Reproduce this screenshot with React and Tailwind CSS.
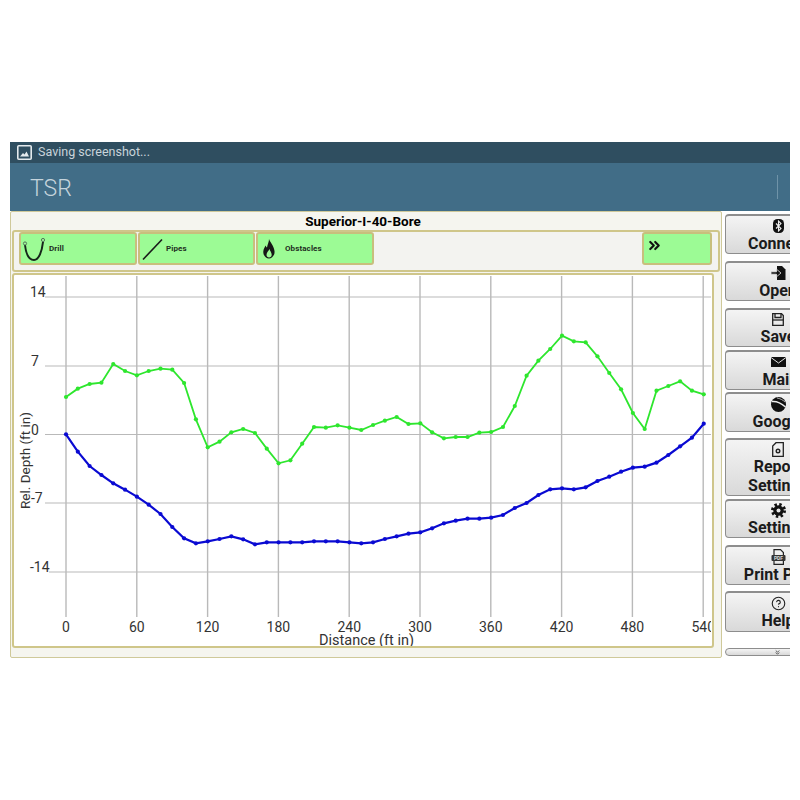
import { CircleHelp, ChevronsRight, ChevronsDown } from 'lucide-react';

const green = [381,356,342,338,282,303,316,303,296,299,339,448,532,515,487,477,489,536,580,571,521,471,473,466,473,480,465,452,441,462,460,487,505,501,501,488,486,471,408,317,272,237,197,214,217,259,309,358,429,477,362,348,334,362,373];
const blue = [493,545,588,615,640,659,680,704,732,771,805,820,814,807,799,808,823,817,817,817,817,814,814,814,817,820,817,807,799,791,787,775,760,752,746,746,743,735,714,699,675,658,655,658,652,633,620,605,593,590,578,555,529,503,461];

// values were read off the screenshot, chart svg starts at y=275
const toY = (z) => 270 + z / 3 - 275;
const toX = (i) => 52 + i * 11.81;
const xTicks = [0, 60, 120, 180, 240, 300, 360, 420, 480, 540];
const yTicks = [
  { label: 14, y: 22, lx: 16, x1: 31 },
  { label: 7, y: 91, lx: 17, x1: 31 },
  { label: 0, y: 159.5, lx: 17, x1: 31 },
  { label: -7, y: 228, lx: 17, x1: 31 },
  { label: -14, y: 297, lx: 16, x1: 35 },
];

const Series = ({ data, color, width }) => (
  <>
    <polyline points={data.map((v, i) => `${toX(i)},${toY(v)}`).join(' ')} fill="none" stroke={color} strokeWidth={width} />
    {data.map((v, i) => <circle key={i} cx={toX(i)} cy={toY(v)} r="2.1" fill={color} />)}
  </>
);

const Chart = () => (
  <svg width="697" height="371" className="block" style={{ fontFamily: 'Roboto, sans-serif' }}>
    {xTicks.map((t, i) => <line key={t} x1={52 + i * 70.8} x2={52 + i * 70.8} y1="1" y2="342" stroke="#b9b9b9" strokeWidth="1.4" />)}
    {yTicks.map((t) => <line key={t.label} x1={t.x1} x2="697" y1={t.y} y2={t.y} stroke="#b9b9b9" strokeWidth="1.2" />)}
    {yTicks.map((t) => <text key={t.label} x={t.lx} y={t.y} fontSize="14" fill="#333">{t.label}</text>)}
    {xTicks.map((t, i) => <text key={t} x={52 + i * 70.8} y="357" fontSize="14" fill="#333" textAnchor="middle">{t}</text>)}
    <text x="305" y="370" fontSize="14.5" fill="#333">Distance (ft in)</text>
    <text x="0" y="0" fontSize="13.5" fill="#333" transform="translate(16,234) rotate(-90)">Rel. Depth (ft in)</text>
    <Series data={green} color="#2ee62e" width="1.8" />
    <Series data={blue} color="#0a0ad2" width="2.2" />
  </svg>
);

const DrillIcon = () => (
  <svg width="28" height="28" viewBox="0 0 28 28" fill="none">
    <path d="M4 10 C5 19 8 25 13 25 C18 25 21 16 22 7" strokeWidth="2" stroke="#16261a" />
    <circle cx="4" cy="8.5" r="1.6" strokeWidth="1" stroke="#55705a" />
    <circle cx="22" cy="5" r="1.6" strokeWidth="1" stroke="#55705a" />
  </svg>
);

const PipeIcon = () => (
  <svg width="24" height="24" viewBox="0 0 24 24" fill="none" stroke="#1a1a1a" strokeWidth="1.6">
    <path d="M1 22.5 L20 2.5" />
  </svg>
);

const FlameIcon = () => (
  <svg width="12" height="20" viewBox="0 0 12 20">
    <path fill="#161616" fillRule="evenodd" d="M6 0 C7 3 11 7 11.5 12 C12 16 9 19.5 6 19.5 C3 19.5 0 16.5 0.3 12.5 C0.5 9.5 2 8 2.5 6.5 C3.2 7.5 3.5 8.5 4 8.5 C4.5 5.5 6 3 6 0 Z M6.5 10 C5.5 12 3.5 13.5 3.5 16 C3.5 17.5 4.7 18.5 6 18.5 C7.5 18.5 8.7 17.5 8.7 15.8 C8.7 13.5 7 12 6.5 10 Z" />
  </svg>
);

const BluetoothIcon = () => (
  <svg width="11" height="14" viewBox="0 0 11 14">
    <rect width="11" height="14" rx="4.5" fill="#111" />
    <path d="M3 4.5 L8 9.5 L5.5 12 V2 L8 4.5 L3 9.5" fill="none" stroke="#eee" strokeWidth="1.1" />
  </svg>
);

const OpenIcon = () => (
  <svg width="15" height="14" viewBox="0 0 15 14">
    <path d="M6 0 H11 L14.5 3.5 V14 H6 Z" fill="#111" />
    <path d="M0 5.8 H5.5 V3.2 L10 7 L5.5 10.8 V8.2 H0 Z" fill="#111" stroke="#e8e8e8" strokeWidth="0.8" />
  </svg>
);

const SaveIcon = () => (
  <svg width="12" height="13" viewBox="0 0 12 13" fill="none" stroke="#222" strokeWidth="1.3">
    <path d="M0.7 0.7 H9.5 L11.3 2.5 V12.3 H0.7 Z" />
    <path d="M3 0.7 V4.5 H9 V0.7" />
    <path d="M0.7 7 H11.3" />
  </svg>
);

const MailIcon = () => (
  <svg width="15" height="10" viewBox="0 0 15 10">
    <rect width="15" height="10" fill="#111" />
    <path d="M0 0.5 L7.5 6 L15 0.5" fill="none" stroke="#e6e6e6" strokeWidth="1" />
  </svg>
);

const GoogleIcon = () => (
  <svg width="15" height="15" viewBox="0 0 15 15" fill="none">
    <circle cx="7.5" cy="7.5" r="7.5" fill="#111" />
    <path d="M1 4.5 C5 4 10 6 14.5 10" stroke="#eee" strokeWidth="1.5" />
    <path d="M6 1 C9 1.5 12 3 14 5" stroke="#eee" strokeWidth="0.7" />
  </svg>
);

const ReportIcon = () => (
  <svg width="12" height="15" viewBox="0 0 12 15" fill="none" stroke="#222">
    <path d="M4 0.7 H11.3 V14.3 H0.7 V4 Z" strokeWidth="1.3" />
    <circle cx="6" cy="9" r="1.8" strokeWidth="1.4" />
  </svg>
);

const GearIcon = () => (
  <svg width="15" height="15" viewBox="0 0 15 15">
    <circle cx="7.5" cy="7.5" r="5.2" fill="#111" />
    <circle cx="7.5" cy="7.5" r="6" fill="none" stroke="#111" strokeWidth="3" strokeDasharray="2.36 2.36" />
    <circle cx="7.5" cy="7.5" r="2" fill="#e6e6e6" />
  </svg>
);

const PdfIcon = () => (
  <svg width="15" height="16" viewBox="0 0 15 16">
    <path d="M3 0.6 H9.5 L12.4 3.5 V15.4 H3 Z" fill="none" stroke="#222" strokeWidth="1.2" />
    <rect x="0.5" y="6" width="14" height="6" rx="1" fill="#333" />
    <text x="7.5" y="11" fontSize="5" fontWeight="700" fill="#ddd" textAnchor="middle">PDF</text>
  </svg>
);

const StatusIcon = () => (
  <svg width="15" height="15" viewBox="0 0 15 15">
    <rect x="0.8" y="0.8" width="13.4" height="13.4" rx="1" fill="#2f4e60" stroke="#e4eaed" strokeWidth="1.6" />
    <path d="M3 11.5 L6 8 L7.5 9.5 L9.5 6.5 L12 11.5 Z" fill="#e4eaed" />
  </svg>
);

const ToolButton = ({ icon, label, className }) => (
  <div className={`flex h-[33px] items-center rounded-[3px] border-2 border-[#c8bf7d] bg-[#9cfb95] ${className}`}>
    {icon}
    <span className="text-[8px] font-bold tracking-[0.1px] text-[#1f2f1f]">{label}</span>
  </div>
);

const sideButtons = [
  { label: ['Connect'], icon: <BluetoothIcon />, cls: 'h-[40px] mb-[7px]' },
  { label: ['Open'], icon: <OpenIcon />, cls: 'h-[40px] mb-[7px]' },
  { label: ['Save'], icon: <SaveIcon />, cls: 'h-[39px] mb-[3px]' },
  { label: ['Mail'], icon: <MailIcon />, cls: 'h-[40px] mb-[2px]' },
  { label: ['Google'], icon: <GoogleIcon />, cls: 'h-[40px] mb-[6px]' },
  { label: ['Report', 'Settings'], icon: <ReportIcon />, cls: 'h-[58px] mb-[3px]' },
  { label: ['Settings'], icon: <GearIcon />, cls: 'h-[39px] mb-[7px]' },
  { label: ['Print PDF'], icon: <PdfIcon />, cls: 'h-[40px] mb-[6px]' },
  { label: ['Help'], icon: <CircleHelp size={15} strokeWidth={1.8} className="text-[#222]" />, cls: 'h-[41px] mb-[16px]' },
];

export default function App() {
  return (
    <div className="h-[800px] w-[800px] bg-white pl-[10px] pt-[142px]" style={{ fontFamily: 'Roboto, sans-serif' }}>
      <div className="w-[780px] overflow-hidden">
        {/* status bar */}
        <div className="flex h-[21px] items-center gap-[6px] bg-[#2f4e60] pl-[7px]">
          <StatusIcon />
          <span className="text-[12.5px] text-[#c9d4da]">Saving screenshot...</span>
        </div>
        {/* action bar */}
        <div className="flex h-[48px] items-center justify-between bg-[#416d87] pl-[20px] pr-[12px]">
          <span className="pt-[4px] text-[23px] font-light text-[#c5d4dc]">TSR</span>
          <div className="h-[24px] w-px bg-[#6f93a8]" />
        </div>
        <div className="flex h-[447px]">
          <div className="flex h-full w-[712px] shrink-0 flex-col rounded-[2px] border border-[#cfc99a] bg-[#f5f5ef] px-[1px]">
            <div className="h-[18px] pr-[6px] text-center text-[13.5px] leading-[18px] font-bold text-black">Superior-I-40-Bore</div>
            <div className="flex h-[42px] items-start rounded-[3px] border-2 border-[#cfc68a] bg-[#f3f3f0] pl-[5px]">
              <ToolButton icon={<DrillIcon />} label="Drill" className="w-[118px]" />
              <ToolButton icon={<PipeIcon />} label="Pipes" className="ml-px w-[117px] pl-[2px]" />
              <ToolButton icon={<FlameIcon />} label="Obstacles" className="ml-px w-[118px] gap-[10px] pl-[5px]" />
              <div className="ml-[268px] flex h-[33px] w-[70px] items-start rounded-[3px] border-2 border-[#c8bf7d] bg-[#9cfb95] pl-[2px] pt-[3px]">
                <ChevronsRight size={17} strokeWidth={3} className="text-[#111]" />
              </div>
            </div>
            <div className="mt-[1px] h-[375px] w-[702px] overflow-hidden rounded-[3px] border-2 border-[#cfc68a] bg-white">
              <Chart />
            </div>
          </div>
          <div className="ml-[3px] w-[106px] shrink-0 pt-[3px]">
            {sideButtons.map((b) => (
              <div key={b.label.join('-')} className={`flex flex-col items-center rounded-[4px] border border-t-2 border-[#8d8d8d] bg-gradient-to-b from-[#f4f4f4] to-[#d9d9d9] pt-[2px] ${b.cls}`}>
                <div className="flex h-[16px] items-center justify-center">{b.icon}</div>
                {b.label.map((l) => (
                  <span key={l} className="text-[16px] leading-[19px] font-bold whitespace-nowrap text-[#1b1b1b]">{l}</span>
                ))}
              </div>
            ))}
            <div className="flex h-[8px] items-center justify-center rounded-[4px] border border-[#8d8d8d] bg-gradient-to-b from-[#f4f4f4] to-[#d9d9d9] pr-[1px]">
              <ChevronsDown size={7} strokeWidth={2.5} className="text-[#222]" />
            </div>
          </div>
        </div>
      </div>
    </div>
  );
}
